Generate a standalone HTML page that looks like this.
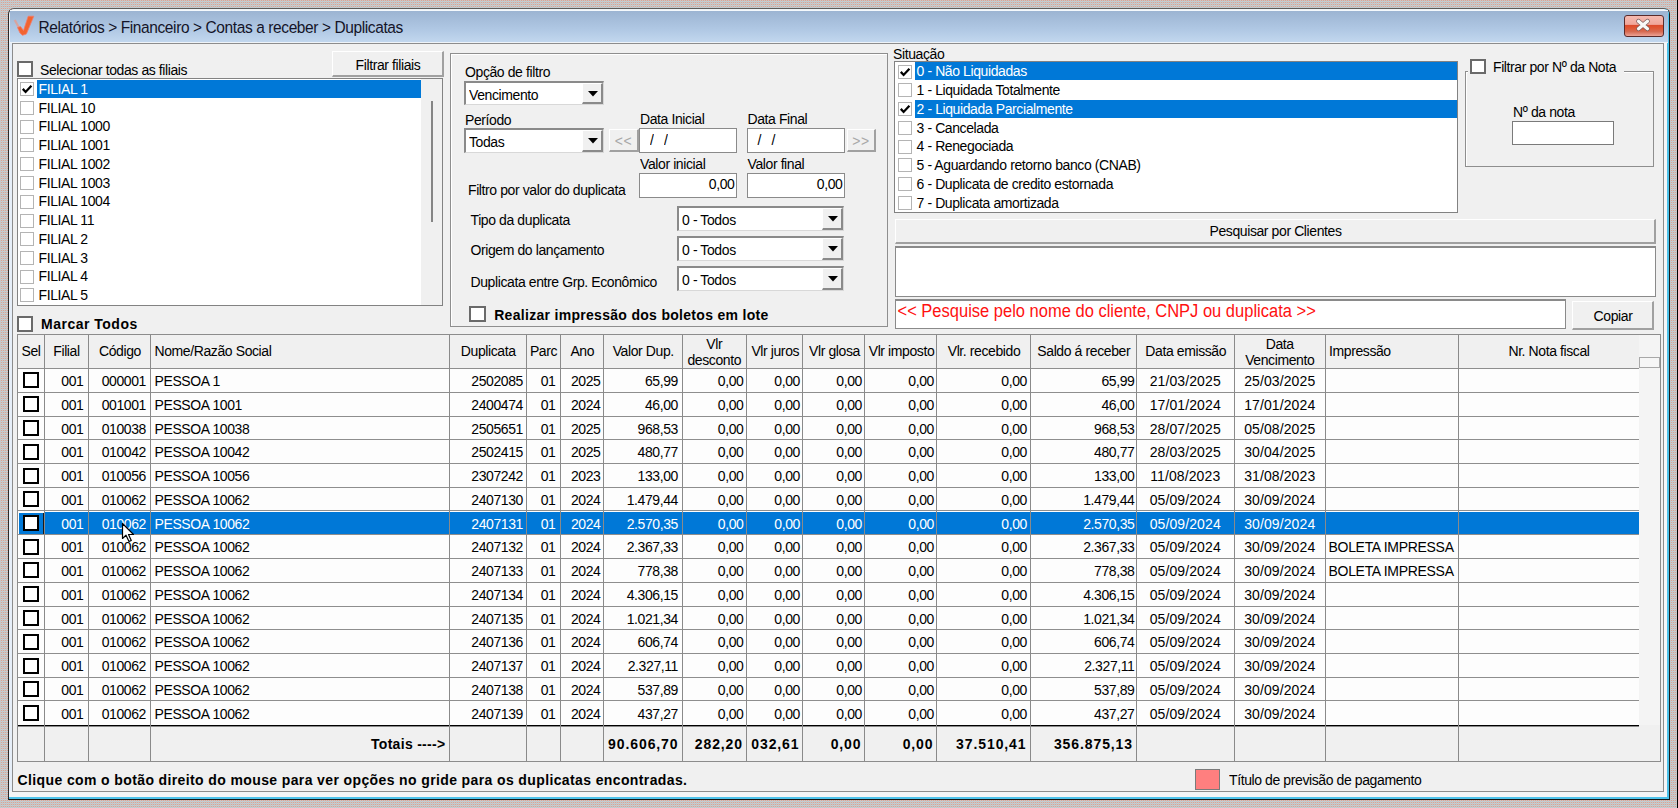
<!DOCTYPE html><html><head><meta charset="utf-8"><style>
html,body{margin:0;padding:0;}
body{width:1678px;height:808px;overflow:hidden;position:relative;background:#c6c4c4;
background-image:conic-gradient(#dea292 0 25%,#bcd2dc 0 50%,#c8c6c6 0 100%);background-size:2px 2px;}
.a{position:absolute;box-sizing:border-box;}
.t{position:absolute;white-space:pre;font-family:"Liberation Sans",sans-serif;transform:scaleY(1.1);transform-origin:0 12px;}
</style></head><body>
<div class="a" style="left:8px;top:8px;width:1662px;height:792px;border:1px solid;border-color:#5c5c5c #1c1c1c #141414 #2a2a2a;border-radius:6px 6px 0 0;background:#eef2f6;"></div>
<div class="a" style="left:9px;top:9px;width:1660px;height:790px;border-right:2px solid #4cc2ea;border-bottom:2px solid #4cc2ea;border-radius:5px 5px 0 0;"></div>
<div class="a" style="left:10px;top:10px;width:1658px;height:1px;background:#f4f8fc;"></div>
<div class="a" style="left:10px;top:11px;width:1658px;height:31px;background:linear-gradient(#9cb4d2,#b0c8e4 60%,#c2d7ee);"></div>
<div class="a" style="left:10px;top:42px;width:1658px;height:1px;background:#eef3f8;"></div>
<div class="a" style="left:9px;top:43px;width:3px;height:754px;background:#e6eef8;"></div>
<div class="a" style="left:1663px;top:43px;width:4px;height:754px;background:#f4f6f8;"></div>
<div class="a" style="left:9px;top:791px;width:1658px;height:6px;background:#f2f4f6;"></div>
<svg class="a" style="left:13px;top:14px" width="24" height="24" viewBox="0 0 24 24"><path d="M1.8 6 L5.8 13.5" stroke="#e89a8a" stroke-width="2.2" fill="none" opacity=".75"/><path d="M15.2 2.2 L20.8 2.2 L13.4 20 L9.5 21.3 L7 19 L4.5 13.5 L7.5 12.5 L10.5 16.5 Z" fill="#f26430" stroke="#f47a6a" stroke-width=".8"/></svg>
<div class="t" style="left:38.5px;top:19.60px;font-size:15.5px;line-height:15.5px;font-weight:400;color:#141428;letter-spacing:-0.4px;">Relatórios &gt; Financeiro &gt; Contas a receber &gt; Duplicatas</div>
<div class="a" style="left:1624px;top:15px;width:40px;height:22px;border:1px solid #5a2a2a;border-radius:3px;background:linear-gradient(#f6bab0 0%,#f0a69a 42%,#dc4a2c 47%,#df5633 60%,#d66a52 78%,#eca295 100%);"></div>
<svg class="a" style="left:1634px;top:17px" width="20" height="16" viewBox="0 0 20 16"><path d="M4.5 4.2 L13.5 11.8 M13.5 4.2 L4.5 11.8" stroke="#7a5a5a" stroke-width="4.6" stroke-linecap="round"/><path d="M4.5 4.2 L13.5 11.8 M13.5 4.2 L4.5 11.8" stroke="#f8f8f8" stroke-width="3.2" stroke-linecap="round"/></svg>
<div class="a" style="left:12px;top:43px;width:1652px;height:749px;border:1px solid #8c8c8c;background:#f0f0f0;"></div>
<div class="a" style="left:17px;top:61px;width:16px;height:16px;border:2px solid #6a6a6a;background:#fff;"></div>
<div class="t" style="left:40px;top:62.70px;font-size:14px;line-height:14px;font-weight:400;color:#000;letter-spacing:-0.4px;">Selecionar todas as filiais</div>
<div class="a" style="left:332px;top:51px;width:112px;height:26px;background:#f0f0f0;border-top:1px solid #fff;border-left:1px solid #fff;border-right:2px solid #a0a0a0;border-bottom:2px solid #a0a0a0;"></div>
<div class="t" style="left:88.0px;width:600px;text-align:center;top:57.70px;font-size:14px;line-height:14px;font-weight:400;color:#000;letter-spacing:-0.4px;">Filtrar filiais</div>
<div class="a" style="left:17px;top:78px;width:426px;height:228px;border:1px solid #828282;background:#fff;"></div>
<div class="a" style="left:421px;top:79px;width:21px;height:226px;background:#f0f0f0;"></div>
<div class="a" style="left:37px;top:79.75px;width:384px;height:18.5px;background:#0078d7;"></div>
<div class="a" style="left:20px;top:82px;width:14px;height:14px;border:1.5px solid #b4b4b4;background:#fff;"></div>
<svg class="a" style="left:20px;top:82px" width="14" height="14" viewBox="0 0 13 13"><path d="M2.6 6.4 L5.2 9.2 L10.6 3.4" stroke="#000" stroke-width="2.1" fill="none"/></svg>
<div class="t" style="left:38.5px;top:81.95px;font-size:14px;line-height:14px;font-weight:400;color:#fff;letter-spacing:-0.4px;">FILIAL 1</div>
<div class="a" style="left:20px;top:101px;width:14px;height:14px;border:1.5px solid #b4b4b4;background:#fff;"></div>
<div class="t" style="left:38.5px;top:100.70px;font-size:14px;line-height:14px;font-weight:400;color:#000;letter-spacing:-0.4px;">FILIAL 10</div>
<div class="a" style="left:20px;top:120px;width:14px;height:14px;border:1.5px solid #b4b4b4;background:#fff;"></div>
<div class="t" style="left:38.5px;top:119.45px;font-size:14px;line-height:14px;font-weight:400;color:#000;letter-spacing:-0.4px;">FILIAL 1000</div>
<div class="a" style="left:20px;top:138px;width:14px;height:14px;border:1.5px solid #b4b4b4;background:#fff;"></div>
<div class="t" style="left:38.5px;top:138.20px;font-size:14px;line-height:14px;font-weight:400;color:#000;letter-spacing:-0.4px;">FILIAL 1001</div>
<div class="a" style="left:20px;top:157px;width:14px;height:14px;border:1.5px solid #b4b4b4;background:#fff;"></div>
<div class="t" style="left:38.5px;top:156.95px;font-size:14px;line-height:14px;font-weight:400;color:#000;letter-spacing:-0.4px;">FILIAL 1002</div>
<div class="a" style="left:20px;top:176px;width:14px;height:14px;border:1.5px solid #b4b4b4;background:#fff;"></div>
<div class="t" style="left:38.5px;top:175.70px;font-size:14px;line-height:14px;font-weight:400;color:#000;letter-spacing:-0.4px;">FILIAL 1003</div>
<div class="a" style="left:20px;top:195px;width:14px;height:14px;border:1.5px solid #b4b4b4;background:#fff;"></div>
<div class="t" style="left:38.5px;top:194.45px;font-size:14px;line-height:14px;font-weight:400;color:#000;letter-spacing:-0.4px;">FILIAL 1004</div>
<div class="a" style="left:20px;top:214px;width:14px;height:14px;border:1.5px solid #b4b4b4;background:#fff;"></div>
<div class="t" style="left:38.5px;top:213.20px;font-size:14px;line-height:14px;font-weight:400;color:#000;letter-spacing:-0.4px;">FILIAL 11</div>
<div class="a" style="left:20px;top:232px;width:14px;height:14px;border:1.5px solid #b4b4b4;background:#fff;"></div>
<div class="t" style="left:38.5px;top:231.95px;font-size:14px;line-height:14px;font-weight:400;color:#000;letter-spacing:-0.4px;">FILIAL 2</div>
<div class="a" style="left:20px;top:251px;width:14px;height:14px;border:1.5px solid #b4b4b4;background:#fff;"></div>
<div class="t" style="left:38.5px;top:250.70px;font-size:14px;line-height:14px;font-weight:400;color:#000;letter-spacing:-0.4px;">FILIAL 3</div>
<div class="a" style="left:20px;top:270px;width:14px;height:14px;border:1.5px solid #b4b4b4;background:#fff;"></div>
<div class="t" style="left:38.5px;top:269.45px;font-size:14px;line-height:14px;font-weight:400;color:#000;letter-spacing:-0.4px;">FILIAL 4</div>
<div class="a" style="left:20px;top:288px;width:14px;height:14px;border:1.5px solid #b4b4b4;background:#fff;"></div>
<div class="t" style="left:38.5px;top:288.20px;font-size:14px;line-height:14px;font-weight:400;color:#000;letter-spacing:-0.4px;">FILIAL 5</div>
<div class="a" style="left:431px;top:101px;width:2px;height:121px;background:#858585;"></div>
<div class="a" style="left:17px;top:316px;width:16px;height:16px;border:2px solid #6a6a6a;background:#fff;"></div>
<div class="t" style="left:41px;top:317.40px;font-size:14px;line-height:14px;font-weight:700;color:#000;letter-spacing:0.5px;">Marcar Todos</div>
<div class="a" style="left:450px;top:53px;width:438px;height:274px;border:1px solid #8e8e8e;box-shadow:inset 1px 1px 0 #fff;"></div>
<div class="t" style="left:465px;top:64.90px;font-size:14px;line-height:14px;font-weight:400;color:#000;letter-spacing:-0.4px;">Opção de filtro</div>
<div class="a" style="left:464px;top:81px;width:140px;height:24px;background:#fff;border-top:2px solid #8a8a8a;border-left:2px solid #8a8a8a;border-right:1px solid #d8d8d8;border-bottom:1px solid #d8d8d8;"></div>
<div class="a" style="left:582px;top:83px;width:21px;height:21px;background:#f0f0f0;border-right:2px solid #8a8a8a;border-bottom:2px solid #8a8a8a;border-top:1px solid #fff;border-left:1px solid #fff;"></div>
<svg class="a" style="left:587.5px;top:90.5px" width="10" height="6" viewBox="0 0 10 6"><path d="M0 0 H10 L5 5.5 Z" fill="#000"/></svg>
<div class="t" style="left:469px;top:87.80px;font-size:14px;line-height:14px;font-weight:400;color:#000;letter-spacing:-0.4px;">Vencimento</div>
<div class="t" style="left:465px;top:112.60px;font-size:14px;line-height:14px;font-weight:400;color:#000;letter-spacing:-0.4px;">Período</div>
<div class="a" style="left:464px;top:128px;width:140px;height:25px;background:#fff;border-top:2px solid #8a8a8a;border-left:2px solid #8a8a8a;border-right:1px solid #d8d8d8;border-bottom:1px solid #d8d8d8;"></div>
<div class="a" style="left:582px;top:130px;width:21px;height:22px;background:#f0f0f0;border-right:2px solid #8a8a8a;border-bottom:2px solid #8a8a8a;border-top:1px solid #fff;border-left:1px solid #fff;"></div>
<svg class="a" style="left:587.5px;top:138.0px" width="10" height="6" viewBox="0 0 10 6"><path d="M0 0 H10 L5 5.5 Z" fill="#000"/></svg>
<div class="t" style="left:469px;top:134.70px;font-size:14px;line-height:14px;font-weight:400;color:#000;letter-spacing:-0.4px;">Todas</div>
<div class="a" style="left:609px;top:129px;width:30px;height:23px;background:#f0f0f0;border-top:1px solid #fff;border-left:1px solid #fff;border-right:2px solid #a0a0a0;border-bottom:2px solid #a0a0a0;"></div>
<div class="t" style="left:323.5px;width:600px;text-align:center;top:133.70px;font-size:14px;line-height:14px;font-weight:400;color:#a8a8a8;letter-spacing:0.5px;">&lt;&lt;</div>
<div class="t" style="left:640px;top:112.40px;font-size:14px;line-height:14px;font-weight:400;color:#000;letter-spacing:-0.4px;">Data Inicial</div>
<div class="a" style="left:639px;top:128px;width:98px;height:25px;background:#fff;border:1px solid #8a8a8a;"></div>
<div class="t" style="left:650px;top:133.20px;font-size:14px;line-height:14px;font-weight:400;color:#000;letter-spacing:0px;">/</div>
<div class="t" style="left:664px;top:133.20px;font-size:14px;line-height:14px;font-weight:400;color:#000;letter-spacing:0px;">/</div>
<div class="t" style="left:747.5px;top:112.40px;font-size:14px;line-height:14px;font-weight:400;color:#000;letter-spacing:-0.4px;">Data Final</div>
<div class="a" style="left:747px;top:128px;width:98px;height:25px;background:#fff;border:1px solid #8a8a8a;"></div>
<div class="t" style="left:757.5px;top:133.20px;font-size:14px;line-height:14px;font-weight:400;color:#000;letter-spacing:0px;">/</div>
<div class="t" style="left:771.5px;top:133.20px;font-size:14px;line-height:14px;font-weight:400;color:#000;letter-spacing:0px;">/</div>
<div class="a" style="left:847px;top:129px;width:29px;height:23px;background:#f0f0f0;border-top:1px solid #fff;border-left:1px solid #fff;border-right:2px solid #a0a0a0;border-bottom:2px solid #a0a0a0;"></div>
<div class="t" style="left:561px;width:600px;text-align:center;top:133.70px;font-size:14px;line-height:14px;font-weight:400;color:#a8a8a8;letter-spacing:0.5px;">&gt;&gt;</div>
<div class="t" style="left:640px;top:157.40px;font-size:14px;line-height:14px;font-weight:400;color:#000;letter-spacing:-0.4px;">Valor inicial</div>
<div class="t" style="left:747.5px;top:157.40px;font-size:14px;line-height:14px;font-weight:400;color:#000;letter-spacing:-0.4px;">Valor final</div>
<div class="a" style="left:639px;top:173px;width:98px;height:25px;background:#fff;border:1px solid #8a8a8a;"></div>
<div class="a" style="left:747px;top:173px;width:98px;height:25px;background:#fff;border:1px solid #8a8a8a;"></div>
<div class="t" style="right:943.5px;top:176.70px;font-size:14px;line-height:14px;font-weight:400;color:#000;letter-spacing:-0.4px;">0,00</div>
<div class="t" style="right:835.5px;top:176.70px;font-size:14px;line-height:14px;font-weight:400;color:#000;letter-spacing:-0.4px;">0,00</div>
<div class="t" style="left:468px;top:182.50px;font-size:14px;line-height:14px;font-weight:400;color:#000;letter-spacing:-0.4px;">Filtro por valor do duplicata</div>
<div class="t" style="left:470.5px;top:212.70px;font-size:14px;line-height:14px;font-weight:400;color:#000;letter-spacing:-0.4px;">Tipo da duplicata</div>
<div class="a" style="left:677px;top:206px;width:167px;height:25px;background:#fff;border-top:2px solid #8a8a8a;border-left:2px solid #8a8a8a;border-right:1px solid #d8d8d8;border-bottom:1px solid #d8d8d8;"></div>
<div class="a" style="left:822px;top:208px;width:21px;height:22px;background:#f0f0f0;border-right:2px solid #8a8a8a;border-bottom:2px solid #8a8a8a;border-top:1px solid #fff;border-left:1px solid #fff;"></div>
<svg class="a" style="left:827.5px;top:216.0px" width="10" height="6" viewBox="0 0 10 6"><path d="M0 0 H10 L5 5.5 Z" fill="#000"/></svg>
<div class="t" style="left:682px;top:212.70px;font-size:14px;line-height:14px;font-weight:400;color:#000;letter-spacing:-0.4px;">0 - Todos</div>
<div class="t" style="left:470.5px;top:243.00px;font-size:14px;line-height:14px;font-weight:400;color:#000;letter-spacing:-0.4px;">Origem do lançamento</div>
<div class="a" style="left:677px;top:236px;width:167px;height:25px;background:#fff;border-top:2px solid #8a8a8a;border-left:2px solid #8a8a8a;border-right:1px solid #d8d8d8;border-bottom:1px solid #d8d8d8;"></div>
<div class="a" style="left:822px;top:238px;width:21px;height:22px;background:#f0f0f0;border-right:2px solid #8a8a8a;border-bottom:2px solid #8a8a8a;border-top:1px solid #fff;border-left:1px solid #fff;"></div>
<svg class="a" style="left:827.5px;top:246.0px" width="10" height="6" viewBox="0 0 10 6"><path d="M0 0 H10 L5 5.5 Z" fill="#000"/></svg>
<div class="t" style="left:682px;top:243.00px;font-size:14px;line-height:14px;font-weight:400;color:#000;letter-spacing:-0.4px;">0 - Todos</div>
<div class="t" style="left:470.5px;top:274.50px;font-size:14px;line-height:14px;font-weight:400;color:#000;letter-spacing:-0.4px;">Duplicata entre Grp. Econômico</div>
<div class="a" style="left:677px;top:266px;width:167px;height:25px;background:#fff;border-top:2px solid #8a8a8a;border-left:2px solid #8a8a8a;border-right:1px solid #d8d8d8;border-bottom:1px solid #d8d8d8;"></div>
<div class="a" style="left:822px;top:268px;width:21px;height:22px;background:#f0f0f0;border-right:2px solid #8a8a8a;border-bottom:2px solid #8a8a8a;border-top:1px solid #fff;border-left:1px solid #fff;"></div>
<svg class="a" style="left:827.5px;top:276.0px" width="10" height="6" viewBox="0 0 10 6"><path d="M0 0 H10 L5 5.5 Z" fill="#000"/></svg>
<div class="t" style="left:682px;top:273.20px;font-size:14px;line-height:14px;font-weight:400;color:#000;letter-spacing:-0.4px;">0 - Todos</div>
<div class="a" style="left:469px;top:306px;width:17px;height:16px;border:2px solid #6a6a6a;background:#fff;"></div>
<div class="t" style="left:494.2px;top:308.00px;font-size:14px;line-height:14px;font-weight:700;color:#000;letter-spacing:0.3px;">Realizar impressão dos boletos em lote</div>
<div class="t" style="left:893px;top:47.20px;font-size:14px;line-height:14px;font-weight:400;color:#000;letter-spacing:-0.4px;">Situação</div>
<div class="a" style="left:894px;top:61px;width:564px;height:152px;border:1px solid #828282;background:#fff;"></div>
<div class="a" style="left:914.5px;top:62.4px;width:542.5px;height:18.000000000000007px;background:#0078d7;"></div>
<div class="a" style="left:898px;top:65px;width:14px;height:14px;border:1.5px solid #b4b4b4;background:#fff;"></div>
<svg class="a" style="left:898px;top:65px" width="14" height="14" viewBox="0 0 13 13"><path d="M2.6 6.4 L5.2 9.2 L10.6 3.4" stroke="#000" stroke-width="2.1" fill="none"/></svg>
<div class="t" style="left:916.5px;top:64.40px;font-size:14px;line-height:14px;font-weight:400;color:#fff;letter-spacing:-0.4px;">0 - Não Liquidadas</div>
<div class="a" style="left:898px;top:83px;width:14px;height:14px;border:1.5px solid #b4b4b4;background:#fff;"></div>
<div class="t" style="left:916.5px;top:83.15px;font-size:14px;line-height:14px;font-weight:400;color:#000;letter-spacing:-0.4px;">1 - Liquidada Totalmente</div>
<div class="a" style="left:914.5px;top:99.9px;width:542.5px;height:18.0px;background:#0078d7;"></div>
<div class="a" style="left:898px;top:102px;width:14px;height:14px;border:1.5px solid #b4b4b4;background:#fff;"></div>
<svg class="a" style="left:898px;top:102px" width="14" height="14" viewBox="0 0 13 13"><path d="M2.6 6.4 L5.2 9.2 L10.6 3.4" stroke="#000" stroke-width="2.1" fill="none"/></svg>
<div class="t" style="left:916.5px;top:101.90px;font-size:14px;line-height:14px;font-weight:400;color:#fff;letter-spacing:-0.4px;">2 - Liquidada Parcialmente</div>
<div class="a" style="left:898px;top:121px;width:14px;height:14px;border:1.5px solid #b4b4b4;background:#fff;"></div>
<div class="t" style="left:916.5px;top:120.65px;font-size:14px;line-height:14px;font-weight:400;color:#000;letter-spacing:-0.4px;">3 - Cancelada</div>
<div class="a" style="left:898px;top:140px;width:14px;height:14px;border:1.5px solid #b4b4b4;background:#fff;"></div>
<div class="t" style="left:916.5px;top:139.40px;font-size:14px;line-height:14px;font-weight:400;color:#000;letter-spacing:-0.4px;">4 - Renegociada</div>
<div class="a" style="left:898px;top:158px;width:14px;height:14px;border:1.5px solid #b4b4b4;background:#fff;"></div>
<div class="t" style="left:916.5px;top:158.15px;font-size:14px;line-height:14px;font-weight:400;color:#000;letter-spacing:-0.4px;">5 - Aguardando retorno banco (CNAB)</div>
<div class="a" style="left:898px;top:177px;width:14px;height:14px;border:1.5px solid #b4b4b4;background:#fff;"></div>
<div class="t" style="left:916.5px;top:176.90px;font-size:14px;line-height:14px;font-weight:400;color:#000;letter-spacing:-0.4px;">6 - Duplicata de credito estornada</div>
<div class="a" style="left:898px;top:196px;width:14px;height:14px;border:1.5px solid #b4b4b4;background:#fff;"></div>
<div class="t" style="left:916.5px;top:195.65px;font-size:14px;line-height:14px;font-weight:400;color:#000;letter-spacing:-0.4px;">7 - Duplicata amortizada</div>
<div class="a" style="left:1465px;top:71px;width:189px;height:96px;border:1px solid #8e8e8e;box-shadow:inset 1px 1px 0 #fff;"></div>
<div class="a" style="left:1468px;top:65px;width:156px;height:11px;background:#f0f0f0;"></div>
<div class="a" style="left:1470px;top:59px;width:16px;height:15px;border:2px solid #6a6a6a;background:#fff;"></div>
<div class="t" style="left:1493px;top:60.40px;font-size:14px;line-height:14px;font-weight:400;color:#000;letter-spacing:-0.4px;">Filtrar por Nº da Nota</div>
<div class="t" style="left:1513px;top:104.60px;font-size:14px;line-height:14px;font-weight:400;color:#000;letter-spacing:-0.4px;">Nº da nota</div>
<div class="a" style="left:1512px;top:121px;width:102px;height:24px;background:#fff;border:1px solid #7a7a7a;"></div>
<div class="a" style="left:895px;top:219px;width:761px;height:25px;background:#f0f0f0;border-top:1px solid #fff;border-left:1px solid #fff;border-right:2px solid #a0a0a0;border-bottom:2px solid #a0a0a0;"></div>
<div class="t" style="left:975.5px;width:600px;text-align:center;top:224.20px;font-size:14px;line-height:14px;font-weight:400;color:#000;letter-spacing:-0.4px;">Pesquisar por Clientes</div>
<div class="a" style="left:894.5px;top:246px;width:761.5px;height:51px;background:#fff;border:1px solid #8a8a8a;border-top:2px solid #8a8a8a;"></div>
<div class="a" style="left:894.5px;top:299px;width:671.5px;height:30px;background:#fff;border:1px solid #8a8a8a;border-top:2px solid #8a8a8a;"></div>
<div class="t" style="left:897.5px;top:303.20px;font-size:16.5px;line-height:16.5px;font-weight:400;color:#ff1010;letter-spacing:0px;">&lt;&lt; Pesquise pelo nome do cliente, CNPJ ou duplicata &gt;&gt;</div>
<div class="a" style="left:1572px;top:301px;width:82px;height:29px;background:#f0f0f0;border-top:1px solid #fff;border-left:1px solid #fff;border-right:2px solid #a0a0a0;border-bottom:2px solid #a0a0a0;"></div>
<div class="t" style="left:1313.0px;width:600px;text-align:center;top:309.20px;font-size:14px;line-height:14px;font-weight:400;color:#000;letter-spacing:-0.4px;">Copiar</div>
<div class="a" style="left:17px;top:334px;width:1644px;height:428px;border:1px solid #8c8c8c;background:#f2f2f2;"></div>
<div class="a" style="left:18px;top:335px;width:1621px;height:33.5px;background:#f0f0f0;"></div>
<div class="a" style="left:18px;top:368.5px;width:1621px;height:356.25px;background:#fdfdfd;"></div>
<div class="a" style="left:44px;top:512.0px;width:1595px;height:22.75px;background:#0078d7;"></div>
<div class="a" style="left:19px;top:512.5px;width:25px;height:22.25px;background:#0078d7;border-right:1.5px solid #1a1a1a;border-bottom:1.5px solid #1a1a1a;"></div>
<div class="a" style="left:18px;top:724.75px;width:1621px;height:36.25px;background:#f0f0f0;"></div>
<div class="a" style="left:1639px;top:335px;width:21px;height:426px;background:#f4f4f4;"></div>
<div class="a" style="left:1639px;top:356.5px;width:21px;height:11.5px;border:1px solid #a8a8a8;background:#f6f6f6;"></div>
<div class="a" style="left:1639px;top:725px;width:21px;height:36px;background:#f0f0f0;"></div>
<div class="a" style="left:18px;top:368px;width:1621px;height:1px;background:#8e8e8e;"></div>
<div class="a" style="left:18px;top:392px;width:1621px;height:1px;background:#8e8e8e;"></div>
<div class="a" style="left:18px;top:416px;width:1621px;height:1px;background:#8e8e8e;"></div>
<div class="a" style="left:18px;top:439px;width:1621px;height:1px;background:#8e8e8e;"></div>
<div class="a" style="left:18px;top:463px;width:1621px;height:1px;background:#8e8e8e;"></div>
<div class="a" style="left:18px;top:487px;width:1621px;height:1px;background:#8e8e8e;"></div>
<div class="a" style="left:18px;top:510px;width:1621px;height:1px;background:#8e8e8e;"></div>
<div class="a" style="left:18px;top:534px;width:1621px;height:1px;background:#8e8e8e;"></div>
<div class="a" style="left:18px;top:558px;width:1621px;height:1px;background:#8e8e8e;"></div>
<div class="a" style="left:18px;top:582px;width:1621px;height:1px;background:#8e8e8e;"></div>
<div class="a" style="left:18px;top:606px;width:1621px;height:1px;background:#8e8e8e;"></div>
<div class="a" style="left:18px;top:629px;width:1621px;height:1px;background:#8e8e8e;"></div>
<div class="a" style="left:18px;top:653px;width:1621px;height:1px;background:#8e8e8e;"></div>
<div class="a" style="left:18px;top:677px;width:1621px;height:1px;background:#8e8e8e;"></div>
<div class="a" style="left:18px;top:700px;width:1621px;height:1px;background:#8e8e8e;"></div>
<div class="a" style="left:18px;top:725px;width:1621px;height:1px;background:#000;"></div>
<div class="a" style="left:18px;top:726px;width:1621px;height:1px;background:#8a8a8a;"></div>
<div class="a" style="left:44px;top:335px;width:1px;height:426px;background:#8a8a8a;"></div>
<div class="a" style="left:88px;top:335px;width:1px;height:426px;background:#8a8a8a;"></div>
<div class="a" style="left:150px;top:335px;width:1px;height:426px;background:#8a8a8a;"></div>
<div class="a" style="left:449px;top:335px;width:1px;height:426px;background:#8a8a8a;"></div>
<div class="a" style="left:526px;top:335px;width:1px;height:426px;background:#8a8a8a;"></div>
<div class="a" style="left:560px;top:335px;width:1px;height:426px;background:#8a8a8a;"></div>
<div class="a" style="left:603px;top:335px;width:1px;height:426px;background:#8a8a8a;"></div>
<div class="a" style="left:682px;top:335px;width:1px;height:426px;background:#8a8a8a;"></div>
<div class="a" style="left:746px;top:335px;width:1px;height:426px;background:#8a8a8a;"></div>
<div class="a" style="left:802px;top:335px;width:1px;height:426px;background:#8a8a8a;"></div>
<div class="a" style="left:864px;top:335px;width:1px;height:426px;background:#8a8a8a;"></div>
<div class="a" style="left:936px;top:335px;width:1px;height:426px;background:#8a8a8a;"></div>
<div class="a" style="left:1030px;top:335px;width:1px;height:426px;background:#8a8a8a;"></div>
<div class="a" style="left:1136px;top:335px;width:1px;height:426px;background:#8a8a8a;"></div>
<div class="a" style="left:1234px;top:335px;width:1px;height:426px;background:#8a8a8a;"></div>
<div class="a" style="left:1325px;top:335px;width:1px;height:426px;background:#8a8a8a;"></div>
<div class="a" style="left:1458px;top:335px;width:1px;height:426px;background:#8a8a8a;"></div>
<div class="t" style="left:-269.0px;width:600px;text-align:center;top:344.20px;font-size:14px;line-height:14px;font-weight:400;color:#000;letter-spacing:-0.4px;">Sel</div>
<div class="t" style="left:-233.5px;width:600px;text-align:center;top:344.20px;font-size:14px;line-height:14px;font-weight:400;color:#000;letter-spacing:-0.4px;">Filial</div>
<div class="t" style="left:-180.0px;width:600px;text-align:center;top:344.20px;font-size:14px;line-height:14px;font-weight:400;color:#000;letter-spacing:-0.4px;">Código</div>
<div class="t" style="left:154.5px;top:344.20px;font-size:14px;line-height:14px;font-weight:400;color:#000;letter-spacing:-0.4px;">Nome/Razão Social</div>
<div class="t" style="left:188.25px;width:600px;text-align:center;top:344.20px;font-size:14px;line-height:14px;font-weight:400;color:#000;letter-spacing:-0.4px;">Duplicata</div>
<div class="t" style="left:243.5px;width:600px;text-align:center;top:344.20px;font-size:14px;line-height:14px;font-weight:400;color:#000;letter-spacing:-0.4px;">Parc</div>
<div class="t" style="left:282.25px;width:600px;text-align:center;top:344.20px;font-size:14px;line-height:14px;font-weight:400;color:#000;letter-spacing:-0.4px;">Ano</div>
<div class="t" style="left:343.25px;width:600px;text-align:center;top:344.20px;font-size:14px;line-height:14px;font-weight:400;color:#000;letter-spacing:-0.4px;">Valor Dup.</div>
<div class="t" style="left:414.25px;width:600px;text-align:center;top:337.20px;font-size:14px;line-height:14px;font-weight:400;color:#000;letter-spacing:-0.4px;">Vlr</div>
<div class="t" style="left:414.25px;width:600px;text-align:center;top:352.70px;font-size:14px;line-height:14px;font-weight:400;color:#000;letter-spacing:-0.4px;">desconto</div>
<div class="t" style="left:475.25px;width:600px;text-align:center;top:344.20px;font-size:14px;line-height:14px;font-weight:400;color:#000;letter-spacing:-0.4px;">Vlr juros</div>
<div class="t" style="left:534.5px;width:600px;text-align:center;top:344.20px;font-size:14px;line-height:14px;font-weight:400;color:#000;letter-spacing:-0.4px;">Vlr glosa</div>
<div class="t" style="left:601.5px;width:600px;text-align:center;top:344.20px;font-size:14px;line-height:14px;font-weight:400;color:#000;letter-spacing:-0.4px;">Vlr imposto</div>
<div class="t" style="left:684.0px;width:600px;text-align:center;top:344.20px;font-size:14px;line-height:14px;font-weight:400;color:#000;letter-spacing:-0.4px;">Vlr. recebido</div>
<div class="t" style="left:783.75px;width:600px;text-align:center;top:344.20px;font-size:14px;line-height:14px;font-weight:400;color:#000;letter-spacing:-0.4px;">Saldo á receber</div>
<div class="t" style="left:885.75px;width:600px;text-align:center;top:344.20px;font-size:14px;line-height:14px;font-weight:400;color:#000;letter-spacing:-0.4px;">Data emissão</div>
<div class="t" style="left:979.75px;width:600px;text-align:center;top:337.20px;font-size:14px;line-height:14px;font-weight:400;color:#000;letter-spacing:-0.4px;">Data</div>
<div class="t" style="left:979.75px;width:600px;text-align:center;top:352.70px;font-size:14px;line-height:14px;font-weight:400;color:#000;letter-spacing:-0.4px;">Vencimento</div>
<div class="t" style="left:1329.0px;top:344.20px;font-size:14px;line-height:14px;font-weight:400;color:#000;letter-spacing:-0.4px;">Impressão</div>
<div class="t" style="left:1249.0px;width:600px;text-align:center;top:344.20px;font-size:14px;line-height:14px;font-weight:400;color:#000;letter-spacing:-0.4px;">Nr. Nota fiscal</div>
<div class="a" style="left:23px;top:372px;width:16px;height:16px;border:2px solid #000;background:#fff;"></div>
<div class="t" style="right:1594.5px;top:374.00px;font-size:14px;line-height:14px;font-weight:400;color:#000;letter-spacing:-0.4px;">001</div>
<div class="t" style="right:1532px;top:374.00px;font-size:14px;line-height:14px;font-weight:400;color:#000;letter-spacing:-0.4px;">000001</div>
<div class="t" style="left:154.5px;top:374.00px;font-size:14px;line-height:14px;font-weight:400;color:#000;letter-spacing:-0.4px;">PESSOA 1</div>
<div class="t" style="right:1155px;top:374.00px;font-size:14px;line-height:14px;font-weight:400;color:#000;letter-spacing:-0.4px;">2502085</div>
<div class="t" style="right:1122.5px;top:374.00px;font-size:14px;line-height:14px;font-weight:400;color:#000;letter-spacing:-0.4px;">01</div>
<div class="t" style="right:1077.5px;top:374.00px;font-size:14px;line-height:14px;font-weight:400;color:#000;letter-spacing:-0.4px;">2025</div>
<div class="t" style="right:1000px;top:374.00px;font-size:14px;line-height:14px;font-weight:400;color:#000;letter-spacing:-0.4px;">65,99</div>
<div class="t" style="right:934.5px;top:374.00px;font-size:14px;line-height:14px;font-weight:400;color:#000;letter-spacing:-0.4px;">0,00</div>
<div class="t" style="right:878px;top:374.00px;font-size:14px;line-height:14px;font-weight:400;color:#000;letter-spacing:-0.4px;">0,00</div>
<div class="t" style="right:816px;top:374.00px;font-size:14px;line-height:14px;font-weight:400;color:#000;letter-spacing:-0.4px;">0,00</div>
<div class="t" style="right:744px;top:374.00px;font-size:14px;line-height:14px;font-weight:400;color:#000;letter-spacing:-0.4px;">0,00</div>
<div class="t" style="right:651px;top:374.00px;font-size:14px;line-height:14px;font-weight:400;color:#000;letter-spacing:-0.4px;">0,00</div>
<div class="t" style="right:543.5px;top:374.00px;font-size:14px;line-height:14px;font-weight:400;color:#000;letter-spacing:-0.4px;">65,99</div>
<div class="t" style="left:885.25px;width:600px;text-align:center;top:374.00px;font-size:14px;line-height:14px;font-weight:400;color:#000;letter-spacing:0.1px;">21/03/2025</div>
<div class="t" style="left:979.75px;width:600px;text-align:center;top:374.00px;font-size:14px;line-height:14px;font-weight:400;color:#000;letter-spacing:0.1px;">25/03/2025</div>
<div class="a" style="left:23px;top:396px;width:16px;height:16px;border:2px solid #000;background:#fff;"></div>
<div class="t" style="right:1594.5px;top:397.75px;font-size:14px;line-height:14px;font-weight:400;color:#000;letter-spacing:-0.4px;">001</div>
<div class="t" style="right:1532px;top:397.75px;font-size:14px;line-height:14px;font-weight:400;color:#000;letter-spacing:-0.4px;">001001</div>
<div class="t" style="left:154.5px;top:397.75px;font-size:14px;line-height:14px;font-weight:400;color:#000;letter-spacing:-0.4px;">PESSOA 1001</div>
<div class="t" style="right:1155px;top:397.75px;font-size:14px;line-height:14px;font-weight:400;color:#000;letter-spacing:-0.4px;">2400474</div>
<div class="t" style="right:1122.5px;top:397.75px;font-size:14px;line-height:14px;font-weight:400;color:#000;letter-spacing:-0.4px;">01</div>
<div class="t" style="right:1077.5px;top:397.75px;font-size:14px;line-height:14px;font-weight:400;color:#000;letter-spacing:-0.4px;">2024</div>
<div class="t" style="right:1000px;top:397.75px;font-size:14px;line-height:14px;font-weight:400;color:#000;letter-spacing:-0.4px;">46,00</div>
<div class="t" style="right:934.5px;top:397.75px;font-size:14px;line-height:14px;font-weight:400;color:#000;letter-spacing:-0.4px;">0,00</div>
<div class="t" style="right:878px;top:397.75px;font-size:14px;line-height:14px;font-weight:400;color:#000;letter-spacing:-0.4px;">0,00</div>
<div class="t" style="right:816px;top:397.75px;font-size:14px;line-height:14px;font-weight:400;color:#000;letter-spacing:-0.4px;">0,00</div>
<div class="t" style="right:744px;top:397.75px;font-size:14px;line-height:14px;font-weight:400;color:#000;letter-spacing:-0.4px;">0,00</div>
<div class="t" style="right:651px;top:397.75px;font-size:14px;line-height:14px;font-weight:400;color:#000;letter-spacing:-0.4px;">0,00</div>
<div class="t" style="right:543.5px;top:397.75px;font-size:14px;line-height:14px;font-weight:400;color:#000;letter-spacing:-0.4px;">46,00</div>
<div class="t" style="left:885.25px;width:600px;text-align:center;top:397.75px;font-size:14px;line-height:14px;font-weight:400;color:#000;letter-spacing:0.1px;">17/01/2024</div>
<div class="t" style="left:979.75px;width:600px;text-align:center;top:397.75px;font-size:14px;line-height:14px;font-weight:400;color:#000;letter-spacing:0.1px;">17/01/2024</div>
<div class="a" style="left:23px;top:420px;width:16px;height:16px;border:2px solid #000;background:#fff;"></div>
<div class="t" style="right:1594.5px;top:421.50px;font-size:14px;line-height:14px;font-weight:400;color:#000;letter-spacing:-0.4px;">001</div>
<div class="t" style="right:1532px;top:421.50px;font-size:14px;line-height:14px;font-weight:400;color:#000;letter-spacing:-0.4px;">010038</div>
<div class="t" style="left:154.5px;top:421.50px;font-size:14px;line-height:14px;font-weight:400;color:#000;letter-spacing:-0.4px;">PESSOA 10038</div>
<div class="t" style="right:1155px;top:421.50px;font-size:14px;line-height:14px;font-weight:400;color:#000;letter-spacing:-0.4px;">2505651</div>
<div class="t" style="right:1122.5px;top:421.50px;font-size:14px;line-height:14px;font-weight:400;color:#000;letter-spacing:-0.4px;">01</div>
<div class="t" style="right:1077.5px;top:421.50px;font-size:14px;line-height:14px;font-weight:400;color:#000;letter-spacing:-0.4px;">2025</div>
<div class="t" style="right:1000px;top:421.50px;font-size:14px;line-height:14px;font-weight:400;color:#000;letter-spacing:-0.4px;">968,53</div>
<div class="t" style="right:934.5px;top:421.50px;font-size:14px;line-height:14px;font-weight:400;color:#000;letter-spacing:-0.4px;">0,00</div>
<div class="t" style="right:878px;top:421.50px;font-size:14px;line-height:14px;font-weight:400;color:#000;letter-spacing:-0.4px;">0,00</div>
<div class="t" style="right:816px;top:421.50px;font-size:14px;line-height:14px;font-weight:400;color:#000;letter-spacing:-0.4px;">0,00</div>
<div class="t" style="right:744px;top:421.50px;font-size:14px;line-height:14px;font-weight:400;color:#000;letter-spacing:-0.4px;">0,00</div>
<div class="t" style="right:651px;top:421.50px;font-size:14px;line-height:14px;font-weight:400;color:#000;letter-spacing:-0.4px;">0,00</div>
<div class="t" style="right:543.5px;top:421.50px;font-size:14px;line-height:14px;font-weight:400;color:#000;letter-spacing:-0.4px;">968,53</div>
<div class="t" style="left:885.25px;width:600px;text-align:center;top:421.50px;font-size:14px;line-height:14px;font-weight:400;color:#000;letter-spacing:0.1px;">28/07/2025</div>
<div class="t" style="left:979.75px;width:600px;text-align:center;top:421.50px;font-size:14px;line-height:14px;font-weight:400;color:#000;letter-spacing:0.1px;">05/08/2025</div>
<div class="a" style="left:23px;top:444px;width:16px;height:16px;border:2px solid #000;background:#fff;"></div>
<div class="t" style="right:1594.5px;top:445.25px;font-size:14px;line-height:14px;font-weight:400;color:#000;letter-spacing:-0.4px;">001</div>
<div class="t" style="right:1532px;top:445.25px;font-size:14px;line-height:14px;font-weight:400;color:#000;letter-spacing:-0.4px;">010042</div>
<div class="t" style="left:154.5px;top:445.25px;font-size:14px;line-height:14px;font-weight:400;color:#000;letter-spacing:-0.4px;">PESSOA 10042</div>
<div class="t" style="right:1155px;top:445.25px;font-size:14px;line-height:14px;font-weight:400;color:#000;letter-spacing:-0.4px;">2502415</div>
<div class="t" style="right:1122.5px;top:445.25px;font-size:14px;line-height:14px;font-weight:400;color:#000;letter-spacing:-0.4px;">01</div>
<div class="t" style="right:1077.5px;top:445.25px;font-size:14px;line-height:14px;font-weight:400;color:#000;letter-spacing:-0.4px;">2025</div>
<div class="t" style="right:1000px;top:445.25px;font-size:14px;line-height:14px;font-weight:400;color:#000;letter-spacing:-0.4px;">480,77</div>
<div class="t" style="right:934.5px;top:445.25px;font-size:14px;line-height:14px;font-weight:400;color:#000;letter-spacing:-0.4px;">0,00</div>
<div class="t" style="right:878px;top:445.25px;font-size:14px;line-height:14px;font-weight:400;color:#000;letter-spacing:-0.4px;">0,00</div>
<div class="t" style="right:816px;top:445.25px;font-size:14px;line-height:14px;font-weight:400;color:#000;letter-spacing:-0.4px;">0,00</div>
<div class="t" style="right:744px;top:445.25px;font-size:14px;line-height:14px;font-weight:400;color:#000;letter-spacing:-0.4px;">0,00</div>
<div class="t" style="right:651px;top:445.25px;font-size:14px;line-height:14px;font-weight:400;color:#000;letter-spacing:-0.4px;">0,00</div>
<div class="t" style="right:543.5px;top:445.25px;font-size:14px;line-height:14px;font-weight:400;color:#000;letter-spacing:-0.4px;">480,77</div>
<div class="t" style="left:885.25px;width:600px;text-align:center;top:445.25px;font-size:14px;line-height:14px;font-weight:400;color:#000;letter-spacing:0.1px;">28/03/2025</div>
<div class="t" style="left:979.75px;width:600px;text-align:center;top:445.25px;font-size:14px;line-height:14px;font-weight:400;color:#000;letter-spacing:0.1px;">30/04/2025</div>
<div class="a" style="left:23px;top:468px;width:16px;height:16px;border:2px solid #000;background:#fff;"></div>
<div class="t" style="right:1594.5px;top:469.00px;font-size:14px;line-height:14px;font-weight:400;color:#000;letter-spacing:-0.4px;">001</div>
<div class="t" style="right:1532px;top:469.00px;font-size:14px;line-height:14px;font-weight:400;color:#000;letter-spacing:-0.4px;">010056</div>
<div class="t" style="left:154.5px;top:469.00px;font-size:14px;line-height:14px;font-weight:400;color:#000;letter-spacing:-0.4px;">PESSOA 10056</div>
<div class="t" style="right:1155px;top:469.00px;font-size:14px;line-height:14px;font-weight:400;color:#000;letter-spacing:-0.4px;">2307242</div>
<div class="t" style="right:1122.5px;top:469.00px;font-size:14px;line-height:14px;font-weight:400;color:#000;letter-spacing:-0.4px;">01</div>
<div class="t" style="right:1077.5px;top:469.00px;font-size:14px;line-height:14px;font-weight:400;color:#000;letter-spacing:-0.4px;">2023</div>
<div class="t" style="right:1000px;top:469.00px;font-size:14px;line-height:14px;font-weight:400;color:#000;letter-spacing:-0.4px;">133,00</div>
<div class="t" style="right:934.5px;top:469.00px;font-size:14px;line-height:14px;font-weight:400;color:#000;letter-spacing:-0.4px;">0,00</div>
<div class="t" style="right:878px;top:469.00px;font-size:14px;line-height:14px;font-weight:400;color:#000;letter-spacing:-0.4px;">0,00</div>
<div class="t" style="right:816px;top:469.00px;font-size:14px;line-height:14px;font-weight:400;color:#000;letter-spacing:-0.4px;">0,00</div>
<div class="t" style="right:744px;top:469.00px;font-size:14px;line-height:14px;font-weight:400;color:#000;letter-spacing:-0.4px;">0,00</div>
<div class="t" style="right:651px;top:469.00px;font-size:14px;line-height:14px;font-weight:400;color:#000;letter-spacing:-0.4px;">0,00</div>
<div class="t" style="right:543.5px;top:469.00px;font-size:14px;line-height:14px;font-weight:400;color:#000;letter-spacing:-0.4px;">133,00</div>
<div class="t" style="left:885.25px;width:600px;text-align:center;top:469.00px;font-size:14px;line-height:14px;font-weight:400;color:#000;letter-spacing:0.1px;">11/08/2023</div>
<div class="t" style="left:979.75px;width:600px;text-align:center;top:469.00px;font-size:14px;line-height:14px;font-weight:400;color:#000;letter-spacing:0.1px;">31/08/2023</div>
<div class="a" style="left:23px;top:491px;width:16px;height:16px;border:2px solid #000;background:#fff;"></div>
<div class="t" style="right:1594.5px;top:492.75px;font-size:14px;line-height:14px;font-weight:400;color:#000;letter-spacing:-0.4px;">001</div>
<div class="t" style="right:1532px;top:492.75px;font-size:14px;line-height:14px;font-weight:400;color:#000;letter-spacing:-0.4px;">010062</div>
<div class="t" style="left:154.5px;top:492.75px;font-size:14px;line-height:14px;font-weight:400;color:#000;letter-spacing:-0.4px;">PESSOA 10062</div>
<div class="t" style="right:1155px;top:492.75px;font-size:14px;line-height:14px;font-weight:400;color:#000;letter-spacing:-0.4px;">2407130</div>
<div class="t" style="right:1122.5px;top:492.75px;font-size:14px;line-height:14px;font-weight:400;color:#000;letter-spacing:-0.4px;">01</div>
<div class="t" style="right:1077.5px;top:492.75px;font-size:14px;line-height:14px;font-weight:400;color:#000;letter-spacing:-0.4px;">2024</div>
<div class="t" style="right:1000px;top:492.75px;font-size:14px;line-height:14px;font-weight:400;color:#000;letter-spacing:-0.4px;">1.479,44</div>
<div class="t" style="right:934.5px;top:492.75px;font-size:14px;line-height:14px;font-weight:400;color:#000;letter-spacing:-0.4px;">0,00</div>
<div class="t" style="right:878px;top:492.75px;font-size:14px;line-height:14px;font-weight:400;color:#000;letter-spacing:-0.4px;">0,00</div>
<div class="t" style="right:816px;top:492.75px;font-size:14px;line-height:14px;font-weight:400;color:#000;letter-spacing:-0.4px;">0,00</div>
<div class="t" style="right:744px;top:492.75px;font-size:14px;line-height:14px;font-weight:400;color:#000;letter-spacing:-0.4px;">0,00</div>
<div class="t" style="right:651px;top:492.75px;font-size:14px;line-height:14px;font-weight:400;color:#000;letter-spacing:-0.4px;">0,00</div>
<div class="t" style="right:543.5px;top:492.75px;font-size:14px;line-height:14px;font-weight:400;color:#000;letter-spacing:-0.4px;">1.479,44</div>
<div class="t" style="left:885.25px;width:600px;text-align:center;top:492.75px;font-size:14px;line-height:14px;font-weight:400;color:#000;letter-spacing:0.1px;">05/09/2024</div>
<div class="t" style="left:979.75px;width:600px;text-align:center;top:492.75px;font-size:14px;line-height:14px;font-weight:400;color:#000;letter-spacing:0.1px;">30/09/2024</div>
<div class="a" style="left:23px;top:515px;width:16px;height:16px;border:2px solid #000;background:#fff;"></div>
<div class="t" style="right:1594.5px;top:516.50px;font-size:14px;line-height:14px;font-weight:400;color:#fff;letter-spacing:-0.4px;">001</div>
<div class="t" style="right:1532px;top:516.50px;font-size:14px;line-height:14px;font-weight:400;color:#fff;letter-spacing:-0.4px;">010062</div>
<div class="t" style="left:154.5px;top:516.50px;font-size:14px;line-height:14px;font-weight:400;color:#fff;letter-spacing:-0.4px;">PESSOA 10062</div>
<div class="t" style="right:1155px;top:516.50px;font-size:14px;line-height:14px;font-weight:400;color:#fff;letter-spacing:-0.4px;">2407131</div>
<div class="t" style="right:1122.5px;top:516.50px;font-size:14px;line-height:14px;font-weight:400;color:#fff;letter-spacing:-0.4px;">01</div>
<div class="t" style="right:1077.5px;top:516.50px;font-size:14px;line-height:14px;font-weight:400;color:#fff;letter-spacing:-0.4px;">2024</div>
<div class="t" style="right:1000px;top:516.50px;font-size:14px;line-height:14px;font-weight:400;color:#fff;letter-spacing:-0.4px;">2.570,35</div>
<div class="t" style="right:934.5px;top:516.50px;font-size:14px;line-height:14px;font-weight:400;color:#fff;letter-spacing:-0.4px;">0,00</div>
<div class="t" style="right:878px;top:516.50px;font-size:14px;line-height:14px;font-weight:400;color:#fff;letter-spacing:-0.4px;">0,00</div>
<div class="t" style="right:816px;top:516.50px;font-size:14px;line-height:14px;font-weight:400;color:#fff;letter-spacing:-0.4px;">0,00</div>
<div class="t" style="right:744px;top:516.50px;font-size:14px;line-height:14px;font-weight:400;color:#fff;letter-spacing:-0.4px;">0,00</div>
<div class="t" style="right:651px;top:516.50px;font-size:14px;line-height:14px;font-weight:400;color:#fff;letter-spacing:-0.4px;">0,00</div>
<div class="t" style="right:543.5px;top:516.50px;font-size:14px;line-height:14px;font-weight:400;color:#fff;letter-spacing:-0.4px;">2.570,35</div>
<div class="t" style="left:885.25px;width:600px;text-align:center;top:516.50px;font-size:14px;line-height:14px;font-weight:400;color:#fff;letter-spacing:0.1px;">05/09/2024</div>
<div class="t" style="left:979.75px;width:600px;text-align:center;top:516.50px;font-size:14px;line-height:14px;font-weight:400;color:#fff;letter-spacing:0.1px;">30/09/2024</div>
<div class="a" style="left:23px;top:539px;width:16px;height:16px;border:2px solid #000;background:#fff;"></div>
<div class="t" style="right:1594.5px;top:540.25px;font-size:14px;line-height:14px;font-weight:400;color:#000;letter-spacing:-0.4px;">001</div>
<div class="t" style="right:1532px;top:540.25px;font-size:14px;line-height:14px;font-weight:400;color:#000;letter-spacing:-0.4px;">010062</div>
<div class="t" style="left:154.5px;top:540.25px;font-size:14px;line-height:14px;font-weight:400;color:#000;letter-spacing:-0.4px;">PESSOA 10062</div>
<div class="t" style="right:1155px;top:540.25px;font-size:14px;line-height:14px;font-weight:400;color:#000;letter-spacing:-0.4px;">2407132</div>
<div class="t" style="right:1122.5px;top:540.25px;font-size:14px;line-height:14px;font-weight:400;color:#000;letter-spacing:-0.4px;">01</div>
<div class="t" style="right:1077.5px;top:540.25px;font-size:14px;line-height:14px;font-weight:400;color:#000;letter-spacing:-0.4px;">2024</div>
<div class="t" style="right:1000px;top:540.25px;font-size:14px;line-height:14px;font-weight:400;color:#000;letter-spacing:-0.4px;">2.367,33</div>
<div class="t" style="right:934.5px;top:540.25px;font-size:14px;line-height:14px;font-weight:400;color:#000;letter-spacing:-0.4px;">0,00</div>
<div class="t" style="right:878px;top:540.25px;font-size:14px;line-height:14px;font-weight:400;color:#000;letter-spacing:-0.4px;">0,00</div>
<div class="t" style="right:816px;top:540.25px;font-size:14px;line-height:14px;font-weight:400;color:#000;letter-spacing:-0.4px;">0,00</div>
<div class="t" style="right:744px;top:540.25px;font-size:14px;line-height:14px;font-weight:400;color:#000;letter-spacing:-0.4px;">0,00</div>
<div class="t" style="right:651px;top:540.25px;font-size:14px;line-height:14px;font-weight:400;color:#000;letter-spacing:-0.4px;">0,00</div>
<div class="t" style="right:543.5px;top:540.25px;font-size:14px;line-height:14px;font-weight:400;color:#000;letter-spacing:-0.4px;">2.367,33</div>
<div class="t" style="left:885.25px;width:600px;text-align:center;top:540.25px;font-size:14px;line-height:14px;font-weight:400;color:#000;letter-spacing:0.1px;">05/09/2024</div>
<div class="t" style="left:979.75px;width:600px;text-align:center;top:540.25px;font-size:14px;line-height:14px;font-weight:400;color:#000;letter-spacing:0.1px;">30/09/2024</div>
<div class="t" style="left:1328.5px;top:540.25px;font-size:14px;line-height:14px;font-weight:400;color:#000;letter-spacing:-0.3px;">BOLETA IMPRESSA</div>
<div class="a" style="left:23px;top:562px;width:16px;height:16px;border:2px solid #000;background:#fff;"></div>
<div class="t" style="right:1594.5px;top:564.00px;font-size:14px;line-height:14px;font-weight:400;color:#000;letter-spacing:-0.4px;">001</div>
<div class="t" style="right:1532px;top:564.00px;font-size:14px;line-height:14px;font-weight:400;color:#000;letter-spacing:-0.4px;">010062</div>
<div class="t" style="left:154.5px;top:564.00px;font-size:14px;line-height:14px;font-weight:400;color:#000;letter-spacing:-0.4px;">PESSOA 10062</div>
<div class="t" style="right:1155px;top:564.00px;font-size:14px;line-height:14px;font-weight:400;color:#000;letter-spacing:-0.4px;">2407133</div>
<div class="t" style="right:1122.5px;top:564.00px;font-size:14px;line-height:14px;font-weight:400;color:#000;letter-spacing:-0.4px;">01</div>
<div class="t" style="right:1077.5px;top:564.00px;font-size:14px;line-height:14px;font-weight:400;color:#000;letter-spacing:-0.4px;">2024</div>
<div class="t" style="right:1000px;top:564.00px;font-size:14px;line-height:14px;font-weight:400;color:#000;letter-spacing:-0.4px;">778,38</div>
<div class="t" style="right:934.5px;top:564.00px;font-size:14px;line-height:14px;font-weight:400;color:#000;letter-spacing:-0.4px;">0,00</div>
<div class="t" style="right:878px;top:564.00px;font-size:14px;line-height:14px;font-weight:400;color:#000;letter-spacing:-0.4px;">0,00</div>
<div class="t" style="right:816px;top:564.00px;font-size:14px;line-height:14px;font-weight:400;color:#000;letter-spacing:-0.4px;">0,00</div>
<div class="t" style="right:744px;top:564.00px;font-size:14px;line-height:14px;font-weight:400;color:#000;letter-spacing:-0.4px;">0,00</div>
<div class="t" style="right:651px;top:564.00px;font-size:14px;line-height:14px;font-weight:400;color:#000;letter-spacing:-0.4px;">0,00</div>
<div class="t" style="right:543.5px;top:564.00px;font-size:14px;line-height:14px;font-weight:400;color:#000;letter-spacing:-0.4px;">778,38</div>
<div class="t" style="left:885.25px;width:600px;text-align:center;top:564.00px;font-size:14px;line-height:14px;font-weight:400;color:#000;letter-spacing:0.1px;">05/09/2024</div>
<div class="t" style="left:979.75px;width:600px;text-align:center;top:564.00px;font-size:14px;line-height:14px;font-weight:400;color:#000;letter-spacing:0.1px;">30/09/2024</div>
<div class="t" style="left:1328.5px;top:564.00px;font-size:14px;line-height:14px;font-weight:400;color:#000;letter-spacing:-0.3px;">BOLETA IMPRESSA</div>
<div class="a" style="left:23px;top:586px;width:16px;height:16px;border:2px solid #000;background:#fff;"></div>
<div class="t" style="right:1594.5px;top:587.75px;font-size:14px;line-height:14px;font-weight:400;color:#000;letter-spacing:-0.4px;">001</div>
<div class="t" style="right:1532px;top:587.75px;font-size:14px;line-height:14px;font-weight:400;color:#000;letter-spacing:-0.4px;">010062</div>
<div class="t" style="left:154.5px;top:587.75px;font-size:14px;line-height:14px;font-weight:400;color:#000;letter-spacing:-0.4px;">PESSOA 10062</div>
<div class="t" style="right:1155px;top:587.75px;font-size:14px;line-height:14px;font-weight:400;color:#000;letter-spacing:-0.4px;">2407134</div>
<div class="t" style="right:1122.5px;top:587.75px;font-size:14px;line-height:14px;font-weight:400;color:#000;letter-spacing:-0.4px;">01</div>
<div class="t" style="right:1077.5px;top:587.75px;font-size:14px;line-height:14px;font-weight:400;color:#000;letter-spacing:-0.4px;">2024</div>
<div class="t" style="right:1000px;top:587.75px;font-size:14px;line-height:14px;font-weight:400;color:#000;letter-spacing:-0.4px;">4.306,15</div>
<div class="t" style="right:934.5px;top:587.75px;font-size:14px;line-height:14px;font-weight:400;color:#000;letter-spacing:-0.4px;">0,00</div>
<div class="t" style="right:878px;top:587.75px;font-size:14px;line-height:14px;font-weight:400;color:#000;letter-spacing:-0.4px;">0,00</div>
<div class="t" style="right:816px;top:587.75px;font-size:14px;line-height:14px;font-weight:400;color:#000;letter-spacing:-0.4px;">0,00</div>
<div class="t" style="right:744px;top:587.75px;font-size:14px;line-height:14px;font-weight:400;color:#000;letter-spacing:-0.4px;">0,00</div>
<div class="t" style="right:651px;top:587.75px;font-size:14px;line-height:14px;font-weight:400;color:#000;letter-spacing:-0.4px;">0,00</div>
<div class="t" style="right:543.5px;top:587.75px;font-size:14px;line-height:14px;font-weight:400;color:#000;letter-spacing:-0.4px;">4.306,15</div>
<div class="t" style="left:885.25px;width:600px;text-align:center;top:587.75px;font-size:14px;line-height:14px;font-weight:400;color:#000;letter-spacing:0.1px;">05/09/2024</div>
<div class="t" style="left:979.75px;width:600px;text-align:center;top:587.75px;font-size:14px;line-height:14px;font-weight:400;color:#000;letter-spacing:0.1px;">30/09/2024</div>
<div class="a" style="left:23px;top:610px;width:16px;height:16px;border:2px solid #000;background:#fff;"></div>
<div class="t" style="right:1594.5px;top:611.50px;font-size:14px;line-height:14px;font-weight:400;color:#000;letter-spacing:-0.4px;">001</div>
<div class="t" style="right:1532px;top:611.50px;font-size:14px;line-height:14px;font-weight:400;color:#000;letter-spacing:-0.4px;">010062</div>
<div class="t" style="left:154.5px;top:611.50px;font-size:14px;line-height:14px;font-weight:400;color:#000;letter-spacing:-0.4px;">PESSOA 10062</div>
<div class="t" style="right:1155px;top:611.50px;font-size:14px;line-height:14px;font-weight:400;color:#000;letter-spacing:-0.4px;">2407135</div>
<div class="t" style="right:1122.5px;top:611.50px;font-size:14px;line-height:14px;font-weight:400;color:#000;letter-spacing:-0.4px;">01</div>
<div class="t" style="right:1077.5px;top:611.50px;font-size:14px;line-height:14px;font-weight:400;color:#000;letter-spacing:-0.4px;">2024</div>
<div class="t" style="right:1000px;top:611.50px;font-size:14px;line-height:14px;font-weight:400;color:#000;letter-spacing:-0.4px;">1.021,34</div>
<div class="t" style="right:934.5px;top:611.50px;font-size:14px;line-height:14px;font-weight:400;color:#000;letter-spacing:-0.4px;">0,00</div>
<div class="t" style="right:878px;top:611.50px;font-size:14px;line-height:14px;font-weight:400;color:#000;letter-spacing:-0.4px;">0,00</div>
<div class="t" style="right:816px;top:611.50px;font-size:14px;line-height:14px;font-weight:400;color:#000;letter-spacing:-0.4px;">0,00</div>
<div class="t" style="right:744px;top:611.50px;font-size:14px;line-height:14px;font-weight:400;color:#000;letter-spacing:-0.4px;">0,00</div>
<div class="t" style="right:651px;top:611.50px;font-size:14px;line-height:14px;font-weight:400;color:#000;letter-spacing:-0.4px;">0,00</div>
<div class="t" style="right:543.5px;top:611.50px;font-size:14px;line-height:14px;font-weight:400;color:#000;letter-spacing:-0.4px;">1.021,34</div>
<div class="t" style="left:885.25px;width:600px;text-align:center;top:611.50px;font-size:14px;line-height:14px;font-weight:400;color:#000;letter-spacing:0.1px;">05/09/2024</div>
<div class="t" style="left:979.75px;width:600px;text-align:center;top:611.50px;font-size:14px;line-height:14px;font-weight:400;color:#000;letter-spacing:0.1px;">30/09/2024</div>
<div class="a" style="left:23px;top:634px;width:16px;height:16px;border:2px solid #000;background:#fff;"></div>
<div class="t" style="right:1594.5px;top:635.25px;font-size:14px;line-height:14px;font-weight:400;color:#000;letter-spacing:-0.4px;">001</div>
<div class="t" style="right:1532px;top:635.25px;font-size:14px;line-height:14px;font-weight:400;color:#000;letter-spacing:-0.4px;">010062</div>
<div class="t" style="left:154.5px;top:635.25px;font-size:14px;line-height:14px;font-weight:400;color:#000;letter-spacing:-0.4px;">PESSOA 10062</div>
<div class="t" style="right:1155px;top:635.25px;font-size:14px;line-height:14px;font-weight:400;color:#000;letter-spacing:-0.4px;">2407136</div>
<div class="t" style="right:1122.5px;top:635.25px;font-size:14px;line-height:14px;font-weight:400;color:#000;letter-spacing:-0.4px;">01</div>
<div class="t" style="right:1077.5px;top:635.25px;font-size:14px;line-height:14px;font-weight:400;color:#000;letter-spacing:-0.4px;">2024</div>
<div class="t" style="right:1000px;top:635.25px;font-size:14px;line-height:14px;font-weight:400;color:#000;letter-spacing:-0.4px;">606,74</div>
<div class="t" style="right:934.5px;top:635.25px;font-size:14px;line-height:14px;font-weight:400;color:#000;letter-spacing:-0.4px;">0,00</div>
<div class="t" style="right:878px;top:635.25px;font-size:14px;line-height:14px;font-weight:400;color:#000;letter-spacing:-0.4px;">0,00</div>
<div class="t" style="right:816px;top:635.25px;font-size:14px;line-height:14px;font-weight:400;color:#000;letter-spacing:-0.4px;">0,00</div>
<div class="t" style="right:744px;top:635.25px;font-size:14px;line-height:14px;font-weight:400;color:#000;letter-spacing:-0.4px;">0,00</div>
<div class="t" style="right:651px;top:635.25px;font-size:14px;line-height:14px;font-weight:400;color:#000;letter-spacing:-0.4px;">0,00</div>
<div class="t" style="right:543.5px;top:635.25px;font-size:14px;line-height:14px;font-weight:400;color:#000;letter-spacing:-0.4px;">606,74</div>
<div class="t" style="left:885.25px;width:600px;text-align:center;top:635.25px;font-size:14px;line-height:14px;font-weight:400;color:#000;letter-spacing:0.1px;">05/09/2024</div>
<div class="t" style="left:979.75px;width:600px;text-align:center;top:635.25px;font-size:14px;line-height:14px;font-weight:400;color:#000;letter-spacing:0.1px;">30/09/2024</div>
<div class="a" style="left:23px;top:658px;width:16px;height:16px;border:2px solid #000;background:#fff;"></div>
<div class="t" style="right:1594.5px;top:659.00px;font-size:14px;line-height:14px;font-weight:400;color:#000;letter-spacing:-0.4px;">001</div>
<div class="t" style="right:1532px;top:659.00px;font-size:14px;line-height:14px;font-weight:400;color:#000;letter-spacing:-0.4px;">010062</div>
<div class="t" style="left:154.5px;top:659.00px;font-size:14px;line-height:14px;font-weight:400;color:#000;letter-spacing:-0.4px;">PESSOA 10062</div>
<div class="t" style="right:1155px;top:659.00px;font-size:14px;line-height:14px;font-weight:400;color:#000;letter-spacing:-0.4px;">2407137</div>
<div class="t" style="right:1122.5px;top:659.00px;font-size:14px;line-height:14px;font-weight:400;color:#000;letter-spacing:-0.4px;">01</div>
<div class="t" style="right:1077.5px;top:659.00px;font-size:14px;line-height:14px;font-weight:400;color:#000;letter-spacing:-0.4px;">2024</div>
<div class="t" style="right:1000px;top:659.00px;font-size:14px;line-height:14px;font-weight:400;color:#000;letter-spacing:-0.4px;">2.327,11</div>
<div class="t" style="right:934.5px;top:659.00px;font-size:14px;line-height:14px;font-weight:400;color:#000;letter-spacing:-0.4px;">0,00</div>
<div class="t" style="right:878px;top:659.00px;font-size:14px;line-height:14px;font-weight:400;color:#000;letter-spacing:-0.4px;">0,00</div>
<div class="t" style="right:816px;top:659.00px;font-size:14px;line-height:14px;font-weight:400;color:#000;letter-spacing:-0.4px;">0,00</div>
<div class="t" style="right:744px;top:659.00px;font-size:14px;line-height:14px;font-weight:400;color:#000;letter-spacing:-0.4px;">0,00</div>
<div class="t" style="right:651px;top:659.00px;font-size:14px;line-height:14px;font-weight:400;color:#000;letter-spacing:-0.4px;">0,00</div>
<div class="t" style="right:543.5px;top:659.00px;font-size:14px;line-height:14px;font-weight:400;color:#000;letter-spacing:-0.4px;">2.327,11</div>
<div class="t" style="left:885.25px;width:600px;text-align:center;top:659.00px;font-size:14px;line-height:14px;font-weight:400;color:#000;letter-spacing:0.1px;">05/09/2024</div>
<div class="t" style="left:979.75px;width:600px;text-align:center;top:659.00px;font-size:14px;line-height:14px;font-weight:400;color:#000;letter-spacing:0.1px;">30/09/2024</div>
<div class="a" style="left:23px;top:681px;width:16px;height:16px;border:2px solid #000;background:#fff;"></div>
<div class="t" style="right:1594.5px;top:682.75px;font-size:14px;line-height:14px;font-weight:400;color:#000;letter-spacing:-0.4px;">001</div>
<div class="t" style="right:1532px;top:682.75px;font-size:14px;line-height:14px;font-weight:400;color:#000;letter-spacing:-0.4px;">010062</div>
<div class="t" style="left:154.5px;top:682.75px;font-size:14px;line-height:14px;font-weight:400;color:#000;letter-spacing:-0.4px;">PESSOA 10062</div>
<div class="t" style="right:1155px;top:682.75px;font-size:14px;line-height:14px;font-weight:400;color:#000;letter-spacing:-0.4px;">2407138</div>
<div class="t" style="right:1122.5px;top:682.75px;font-size:14px;line-height:14px;font-weight:400;color:#000;letter-spacing:-0.4px;">01</div>
<div class="t" style="right:1077.5px;top:682.75px;font-size:14px;line-height:14px;font-weight:400;color:#000;letter-spacing:-0.4px;">2024</div>
<div class="t" style="right:1000px;top:682.75px;font-size:14px;line-height:14px;font-weight:400;color:#000;letter-spacing:-0.4px;">537,89</div>
<div class="t" style="right:934.5px;top:682.75px;font-size:14px;line-height:14px;font-weight:400;color:#000;letter-spacing:-0.4px;">0,00</div>
<div class="t" style="right:878px;top:682.75px;font-size:14px;line-height:14px;font-weight:400;color:#000;letter-spacing:-0.4px;">0,00</div>
<div class="t" style="right:816px;top:682.75px;font-size:14px;line-height:14px;font-weight:400;color:#000;letter-spacing:-0.4px;">0,00</div>
<div class="t" style="right:744px;top:682.75px;font-size:14px;line-height:14px;font-weight:400;color:#000;letter-spacing:-0.4px;">0,00</div>
<div class="t" style="right:651px;top:682.75px;font-size:14px;line-height:14px;font-weight:400;color:#000;letter-spacing:-0.4px;">0,00</div>
<div class="t" style="right:543.5px;top:682.75px;font-size:14px;line-height:14px;font-weight:400;color:#000;letter-spacing:-0.4px;">537,89</div>
<div class="t" style="left:885.25px;width:600px;text-align:center;top:682.75px;font-size:14px;line-height:14px;font-weight:400;color:#000;letter-spacing:0.1px;">05/09/2024</div>
<div class="t" style="left:979.75px;width:600px;text-align:center;top:682.75px;font-size:14px;line-height:14px;font-weight:400;color:#000;letter-spacing:0.1px;">30/09/2024</div>
<div class="a" style="left:23px;top:705px;width:16px;height:16px;border:2px solid #000;background:#fff;"></div>
<div class="t" style="right:1594.5px;top:706.50px;font-size:14px;line-height:14px;font-weight:400;color:#000;letter-spacing:-0.4px;">001</div>
<div class="t" style="right:1532px;top:706.50px;font-size:14px;line-height:14px;font-weight:400;color:#000;letter-spacing:-0.4px;">010062</div>
<div class="t" style="left:154.5px;top:706.50px;font-size:14px;line-height:14px;font-weight:400;color:#000;letter-spacing:-0.4px;">PESSOA 10062</div>
<div class="t" style="right:1155px;top:706.50px;font-size:14px;line-height:14px;font-weight:400;color:#000;letter-spacing:-0.4px;">2407139</div>
<div class="t" style="right:1122.5px;top:706.50px;font-size:14px;line-height:14px;font-weight:400;color:#000;letter-spacing:-0.4px;">01</div>
<div class="t" style="right:1077.5px;top:706.50px;font-size:14px;line-height:14px;font-weight:400;color:#000;letter-spacing:-0.4px;">2024</div>
<div class="t" style="right:1000px;top:706.50px;font-size:14px;line-height:14px;font-weight:400;color:#000;letter-spacing:-0.4px;">437,27</div>
<div class="t" style="right:934.5px;top:706.50px;font-size:14px;line-height:14px;font-weight:400;color:#000;letter-spacing:-0.4px;">0,00</div>
<div class="t" style="right:878px;top:706.50px;font-size:14px;line-height:14px;font-weight:400;color:#000;letter-spacing:-0.4px;">0,00</div>
<div class="t" style="right:816px;top:706.50px;font-size:14px;line-height:14px;font-weight:400;color:#000;letter-spacing:-0.4px;">0,00</div>
<div class="t" style="right:744px;top:706.50px;font-size:14px;line-height:14px;font-weight:400;color:#000;letter-spacing:-0.4px;">0,00</div>
<div class="t" style="right:651px;top:706.50px;font-size:14px;line-height:14px;font-weight:400;color:#000;letter-spacing:-0.4px;">0,00</div>
<div class="t" style="right:543.5px;top:706.50px;font-size:14px;line-height:14px;font-weight:400;color:#000;letter-spacing:-0.4px;">437,27</div>
<div class="t" style="left:885.25px;width:600px;text-align:center;top:706.50px;font-size:14px;line-height:14px;font-weight:400;color:#000;letter-spacing:0.1px;">05/09/2024</div>
<div class="t" style="left:979.75px;width:600px;text-align:center;top:706.50px;font-size:14px;line-height:14px;font-weight:400;color:#000;letter-spacing:0.1px;">30/09/2024</div>
<div class="t" style="right:1232.5px;top:737.20px;font-size:14px;line-height:14px;font-weight:700;color:#000;letter-spacing:0.3px;">Totais ----&gt;</div>
<div class="t" style="right:999.5px;top:737.20px;font-size:14px;line-height:14px;font-weight:700;color:#000;letter-spacing:0.9px;">90.606,70</div>
<div class="t" style="right:935.0px;top:737.20px;font-size:14px;line-height:14px;font-weight:700;color:#000;letter-spacing:0.9px;">282,20</div>
<div class="t" style="right:878.5px;top:737.20px;font-size:14px;line-height:14px;font-weight:700;color:#000;letter-spacing:0.9px;">032,61</div>
<div class="t" style="right:816.5px;top:737.20px;font-size:14px;line-height:14px;font-weight:700;color:#000;letter-spacing:0.9px;">0,00</div>
<div class="t" style="right:744.5px;top:737.20px;font-size:14px;line-height:14px;font-weight:700;color:#000;letter-spacing:0.9px;">0,00</div>
<div class="t" style="right:651.5px;top:737.20px;font-size:14px;line-height:14px;font-weight:700;color:#000;letter-spacing:0.9px;">37.510,41</div>
<div class="t" style="right:545.0px;top:737.20px;font-size:14px;line-height:14px;font-weight:700;color:#000;letter-spacing:0.9px;">356.875,13</div>
<svg class="a" style="left:121px;top:522px" width="16" height="22" viewBox="0 0 16 22"><path d="M1.5 1.5 L1.5 16.5 L5 13.2 L8 19.5 L10.3 18.5 L7.5 12.5 L12.5 12.5 Z" fill="#fff" stroke="#000" stroke-width="1.2" stroke-linejoin="round"/></svg>
<div class="t" style="left:17.6px;top:773.20px;font-size:14px;line-height:14px;font-weight:700;color:#000;letter-spacing:0.38px;">Clique com o botão direito do mouse para ver opções no gride para os duplicatas encontradas.</div>
<div class="a" style="left:1195px;top:769px;width:25px;height:21px;background:#ff7f7f;border:1px solid #7a7a7a;"></div>
<div class="t" style="left:1229px;top:772.60px;font-size:14px;line-height:14px;font-weight:400;color:#000;letter-spacing:-0.4px;">Título de previsão de pagamento</div>
<div class="a" style="left:1677px;top:0px;width:1px;height:808px;background:#000;"></div>
</body></html>
